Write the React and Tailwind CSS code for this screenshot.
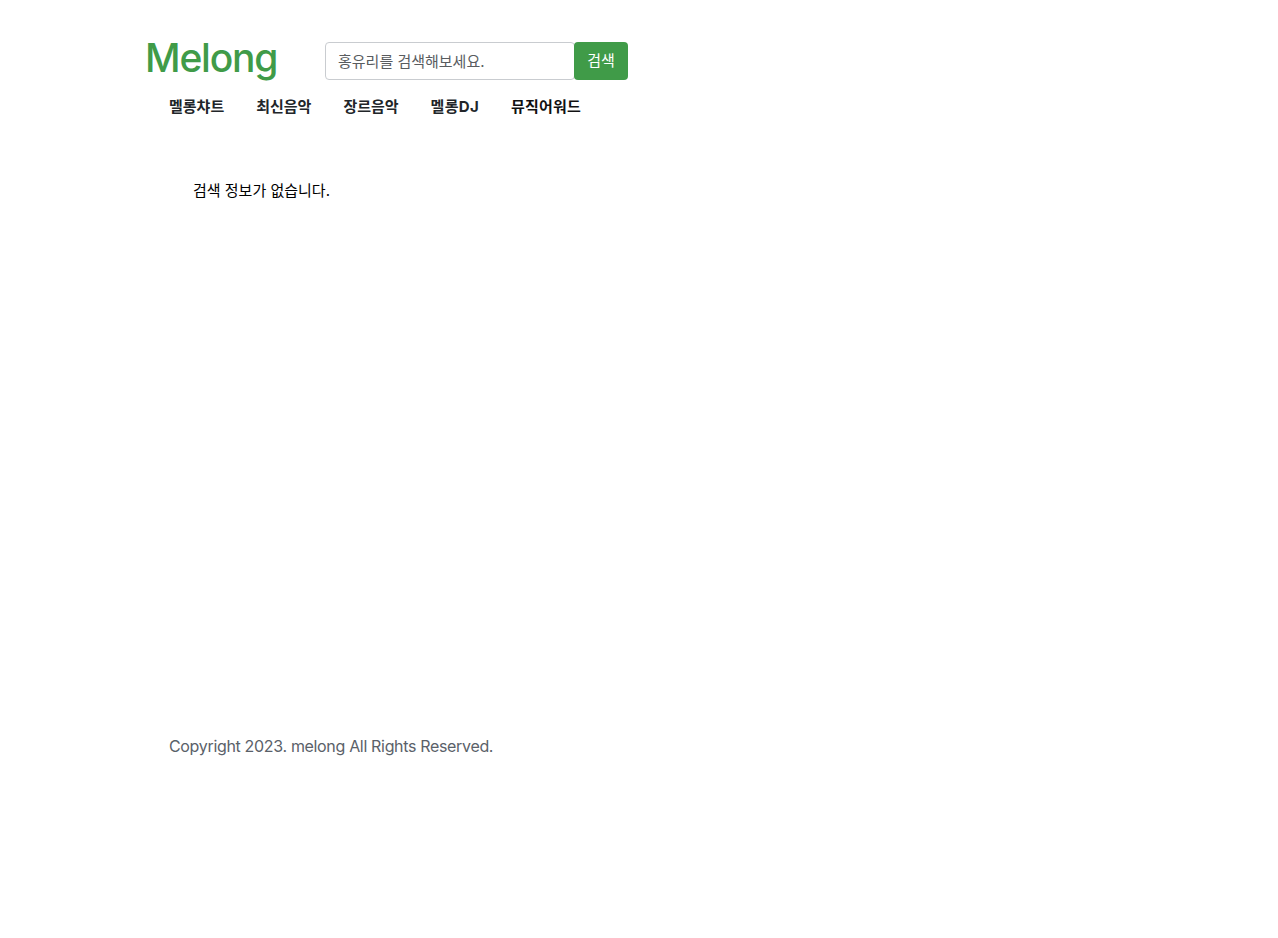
import React from 'react';

const font = 'font-["Inter","Noto_Sans_CJK_KR",sans-serif]';

const menus = ['멜롱챠트', '최신음악', '장르음악', '멜롱DJ', '뮤직어워드'];

const App = () => {
  return (
    <div className={`${font} w-[1278px] h-[938px] bg-white text-black overflow-hidden`}>
      <div className="ml-[145px] pt-[42px] w-[600px]">
        {/* Logo and search */}
        <div className="flex items-center h-[38px]">
          <a className="w-[180px] -mt-[6px] text-[39px] leading-[38px] font-medium tracking-[-1.2px] text-[#409b48]">Melong</a>
          <input
            placeholder="홍유리를 검색해보세요."
            className="w-[250px] h-[38px] px-3 text-[15px] border border-[#c9ccd0] rounded placeholder:text-[#595c5f] outline-none"
          />
          <button className="-ml-px w-[54px] h-[38px] text-[15px] text-white bg-[#409b48] rounded">검색</button>
        </div>
        {/* Menu */}
        <nav className="flex mt-[15px] pl-2">
          {menus.map((m, i) => (
            <a
              key={m}
              className={`px-4 text-[15px] leading-6 font-bold ${i === 4 ? 'text-[#111] tracking-[0.2px]' : 'text-[#212529]'} ${i === 3 ? 'tracking-[0.3px]' : ''}`}
            >
              {m}
            </a>
          ))}
        </nav>
      </div>
      {/* Search result */}
      <p className="ml-[193px] mt-[60px] text-[15px] leading-6">검색 정보가 없습니다.</p>
      {/* Footer */}
      <p className="ml-[169px] mt-[531px] text-base leading-6 tracking-[-0.33px] text-[#5a6169]">Copyright 2023. melong All Rights Reserved.</p>
    </div>
  );
};

export default App;
